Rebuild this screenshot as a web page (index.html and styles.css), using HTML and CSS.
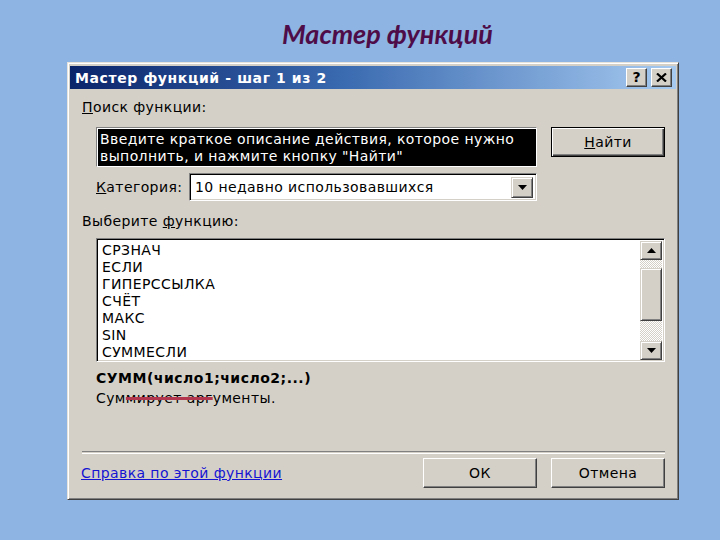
FILE: index.html
```html
<!DOCTYPE html>
<html lang="ru">
<head>
<meta charset="utf-8">
<title>Мастер функций</title>
<link rel="stylesheet" href="styles.css">
</head>
<body>
<header class="page-title"><h1>Мастер функций</h1></header>
<div class="dialog">
  <div class="titlebar">
    <span class="title">Мастер функций - шаг 1 из 2</span>
    <div class="tb-buttons">
      <span class="tb-btn tb-help">?</span>
      <span class="tb-btn"><svg width="11" height="9" viewBox="0 0 11 9"><path d="M1 0.5 L10 8.5 M10 0.5 L1 8.5" stroke="#000" stroke-width="2.2"/></svg></span>
    </div>
  </div>
  <div class="content">
    <div class="label"><u>П</u>оиск функции:</div>
    <div class="search-row">
      <div class="search-box">Введите краткое описание действия, которое нужно<br>выполнить, и нажмите кнопку "Найти"</div>
      <div class="btn btn-default"><u>Н</u>айти</div>
    </div>
    <div class="category-row">
      <span class="cat-label"><u>К</u>атегория:</span>
      <div class="select">
        <span class="select-value">10 недавно использовавшихся</span>
        <span class="select-btn"><svg width="9" height="5" viewBox="0 0 9 5"><path d="M0 0 H9 L4.5 5 Z" fill="#000"/></svg></span>
      </div>
    </div>
    <div class="label label-fn">Выберите <u>ф</u>ункцию:</div>
    <div class="list">
      <ul class="items">
        <li>СРЗНАЧ</li>
        <li>ЕСЛИ</li>
        <li>ГИПЕРССЫЛКА</li>
        <li>СЧЁТ</li>
        <li>МАКС</li>
        <li>SIN</li>
        <li>СУММЕСЛИ</li>
      </ul>
      <div class="scrollbar">
        <span class="sb-btn"><svg width="9" height="5" viewBox="0 0 9 5"><path d="M0 5 H9 L4.5 0 Z" fill="#000"/></svg></span>
        <span class="sb-track sb-track-top"></span>
        <span class="sb-thumb"></span>
        <span class="sb-track sb-track-bottom"></span>
        <span class="sb-btn"><svg width="9" height="5" viewBox="0 0 9 5"><path d="M0 0 H9 L4.5 5 Z" fill="#000"/></svg></span>
      </div>
    </div>
    <div class="signature">СУММ(число1;число2;...)</div>
    <div class="desc">Сум<span class="strike">мирует арг</span>ументы.</div>
    <div class="separator"></div>
    <div class="footer">
      <span class="help">Справка по этой функции</span>
      <div class="buttons">
        <div class="btn">ОК</div>
        <div class="btn">Отмена</div>
      </div>
    </div>
  </div>
</div>
</body>
</html>
```
FILE: styles.css
```css
html, body {
  margin: 0;
  padding: 0;
}
body {
  width: 720px;
  height: 540px;
  background: #8db4e2;
  font-family: "DejaVu Sans", Verdana, sans-serif;
  font-size: 14px;
  letter-spacing: 0.4px;
  color: #000;
  overflow: hidden;
}
.page-title {
  height: 62px;
  box-sizing: border-box;
  padding: 18px 0 0 55px;
  text-align: center;
}
.page-title h1 {
  margin: 0;
  font-family: Lato, "Open Sans", sans-serif;
  font-style: italic;
  font-weight: 700;
  font-size: 27px;
  line-height: 32px;
  letter-spacing: 0;
  color: #4e0d48;
}
.dialog {
  margin-left: 67px;
  width: 612px;
  height: 438px;
  box-sizing: border-box;
  background: #d4d0c8;
  border: 1px solid;
  border-color: #e6e3dd #404040 #404040 #e6e3dd;
  box-shadow: inset 1px 1px #fff, inset -1px -1px #808080;
  padding: 3px 2px 2px 2px;
}
.titlebar {
  height: 23px;
  display: flex;
  align-items: center;
  justify-content: space-between;
  background: linear-gradient(to right, #0a246a 0%, #3a6ab0 45%, #a6caf0 100%);
  padding: 0 4px 0 5px;
}
.title {
  color: #fff;
  font-weight: bold;
  font-size: 14px;
  letter-spacing: 0.6px;
}
.tb-buttons {
  display: flex;
  gap: 4px;
}
.tb-btn {
  width: 21px;
  height: 19px;
  box-sizing: border-box;
  display: flex;
  align-items: center;
  justify-content: center;
  background: #d4d0c8;
  border: 1px solid;
  border-color: #fff #404040 #404040 #fff;
  box-shadow: inset -1px -1px #808080;
}
.tb-help {
  font-weight: bold;
  font-size: 14px;
  line-height: 1;
  letter-spacing: 0;
  padding-bottom: 1px;
}
.content {
  padding: 0 11px 0 12px;
}
.label {
  margin-top: 10px;
  line-height: 17px;
}
.label-fn {
  margin-top: 12px;
}
.search-row {
  display: flex;
  align-items: flex-start;
  gap: 14px;
  margin-top: 11px;
  margin-left: 14px;
}
.search-box {
  width: 441px;
  height: 40px;
  box-sizing: border-box;
  background: #000;
  color: #fff;
  border: 1px solid;
  border-color: #808080 #fff #fff #808080;
  box-shadow: inset 1px 1px #fff;
  padding: 3px 2px 0 3px;
  line-height: 17px;
  white-space: nowrap;
  overflow: hidden;
}
.btn {
  width: 114px;
  height: 30px;
  box-sizing: border-box;
  display: flex;
  align-items: center;
  justify-content: center;
  background: #d4d0c8;
  border: 1px solid;
  border-color: #fff #404040 #404040 #fff;
  box-shadow: inset -1px -1px #808080;
}
.btn-default {
  border: 1px solid #000;
  box-shadow: inset 1px 1px #fff, inset -1px -1px #404040, inset -2px -2px #808080;
}
.category-row {
  display: flex;
  align-items: center;
  margin-top: 6px;
  margin-left: 14px;
}
.cat-label {
  width: 93px;
  line-height: 17px;
}
.select {
  width: 348px;
  height: 28px;
  box-sizing: border-box;
  display: flex;
  align-items: center;
  justify-content: space-between;
  background: #fff;
  border: 1px solid;
  border-color: #808080 #fff #fff #808080;
  box-shadow: inset 1px 1px #000, inset -1px -1px #d4d0c8;
  padding: 2px 3px 2px 5px;
}
.select-value {
  line-height: 17px;
}
.select-btn {
  width: 22px;
  height: 21px;
  box-sizing: border-box;
  display: flex;
  align-items: center;
  justify-content: center;
  background: #d4d0c8;
  border: 1px solid;
  border-color: #d4d0c8 #404040 #404040 #d4d0c8;
  box-shadow: inset 1px 1px #fff, inset -1px -1px #808080;
}
.list {
  display: flex;
  width: 569px;
  height: 124px;
  box-sizing: border-box;
  margin-top: 8px;
  margin-left: 14px;
  background: #fff;
  border: 1px solid;
  border-color: #808080 #fff #fff #808080;
  box-shadow: inset 1px 1px #000, inset -1px -1px #d4d0c8;
  padding: 2px 2px 1px 2px;
}
.items {
  flex: 1;
  margin: 0;
  padding: 1px 0 0 3px;
  list-style: none;
}
.items li {
  line-height: 17px;
  height: 17px;
}
.scrollbar {
  width: 22px;
  display: flex;
  flex-direction: column;
}
.sb-btn {
  height: 19px;
  box-sizing: border-box;
  display: flex;
  align-items: center;
  justify-content: center;
  background: #d4d0c8;
  border: 1px solid;
  border-color: #d4d0c8 #404040 #404040 #d4d0c8;
  box-shadow: inset 1px 1px #fff, inset -1px -1px #808080;
}
.sb-track {
  background: repeating-conic-gradient(#fff 0 25%, #d4d0c8 0 50%) 0 0 / 2px 2px;
}
.sb-track-top {
  height: 8px;
}
.sb-track-bottom {
  flex: 1;
}
.sb-thumb {
  height: 53px;
  box-sizing: border-box;
  background: #d4d0c8;
  border: 1px solid;
  border-color: #d4d0c8 #404040 #404040 #d4d0c8;
  box-shadow: inset 1px 1px #fff, inset -1px -1px #808080;
}
.signature {
  margin-top: 8px;
  margin-left: 14px;
  font-weight: bold;
  letter-spacing: 0.5px;
  line-height: 17px;
}
.desc {
  margin-top: 3px;
  margin-left: 14px;
  line-height: 17px;
}
.strike {
  text-decoration: line-through;
  text-decoration-color: #b3364f;
  text-decoration-thickness: 3px;
}
.separator {
  margin-top: 44px;
  height: 1px;
  border-top: 1px solid #808080;
  border-bottom: 1px solid #fff;
}
.footer {
  display: flex;
  align-items: center;
  justify-content: space-between;
  margin-top: 4px;
}
.help {
  margin-left: -1px;
  color: #1414d2;
  text-decoration: underline;
  line-height: 17px;
}
.buttons {
  display: flex;
  gap: 14px;
}
```
